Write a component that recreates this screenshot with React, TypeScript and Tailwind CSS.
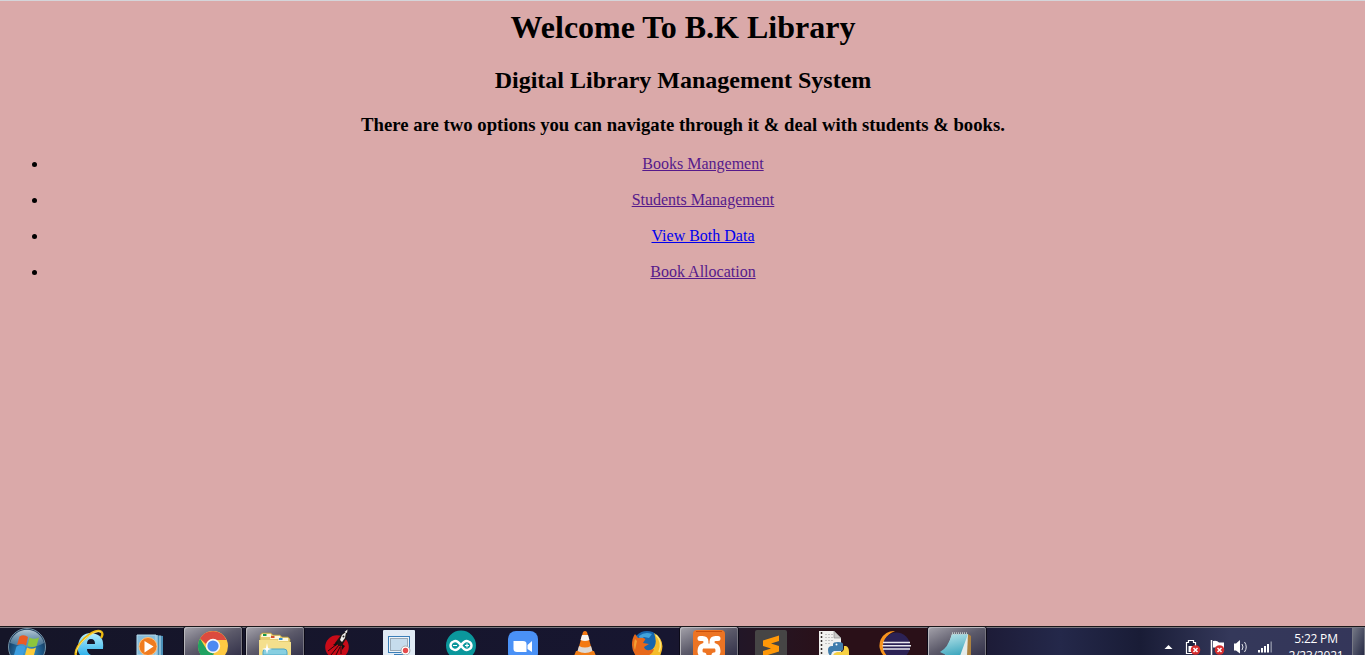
import type { ReactNode } from "react";

const links = [
  { label: "Books Mangement", visited: true },
  { label: "Students Management", visited: true },
  { label: "View Both Data", visited: false },
  { label: "Book Allocation", visited: true },
];

function Slot({ x, active, name, children }: { x: number; active?: boolean; name: string; children: ReactNode }) {
  return (
    <button
      aria-label={name}
      className={
        active
          ? "h-[28px] w-[58px] shrink-0 overflow-hidden rounded-t-[3px] bg-linear-to-br from-[#a5a3ab] via-[#5c5a6a] to-[#34324a] shadow-[inset_1px_1px_0_#b9b8bd,inset_-1px_0_0_#77757f,0_0_0_1px_#0c0a18]"
          : "h-[28px] w-[58px] shrink-0 overflow-hidden"
      }
    >
      <svg className="block" width="58" height="28" viewBox={`${x} 627 58 28`}>
        {children}
      </svg>
    </button>
  );
}

function StartOrb() {
  return (
    <svg className="block shrink-0" width="60" height="28" viewBox="0 627 60 28">
      <defs>
        <radialGradient id="orb" cx="0.5" cy="0.65" r="0.6">
          <stop offset="0" stopColor="#3fa4d8" />
          <stop offset="0.65" stopColor="#1d5888" />
          <stop offset="1" stopColor="#173453" />
        </radialGradient>
        <linearGradient id="gloss" x1="0" y1="0" x2="0" y2="1">
          <stop offset="0" stopColor="#c8dbe6" stopOpacity="0.9" />
          <stop offset="1" stopColor="#8fb6cc" stopOpacity="0.3" />
        </linearGradient>
      </defs>
      <circle cx="27" cy="647" r="18.5" fill="url(#orb)" stroke="#7492a6" />
      <path d="M10 643A17.5 17.5 0 0 1 44 643Q36 648 27 647Q18 646 10 643Z" fill="url(#gloss)" />
      <path d="M19.5 636.5Q24 634 28 637L26 645.5Q22 643 17 645Z" fill="#ea5b24" />
      <path d="M29.500 637.500Q34 640 39 637.500L36.500 646Q32 648 27.500 646Z" fill="#8cc63c" />
      <path d="M16.500 646.500Q21 644.500 25.500 647L23 655H14Z" fill="#3c9ee0" />
      <path d="M27 647.500Q31.500 650 36 647.500L34 655H25Z" fill="#fccb3b" />
    </svg>
  );
}

function Taskbar() {
  return (
    <footer className="h-[29px] shrink-0 overflow-hidden border-t border-[#1b171a] bg-[#17162b]">
      <div className="flex h-[28px] bg-[linear-gradient(90deg,#151528_0,#171630_670px,#241625_755px,#2a1018_830px,#2a1018_925px,#1d1c38_990px,#24284a_1060px,#191c36_1140px,#34385a_1230px,#34365a_1365px)] shadow-[inset_0_1px_0_#77757d]">
        <StartOrb />
        <nav className="flex gap-1">
          <Slot x={60} name="Internet Explorer">
            <defs>
              <linearGradient id="ie" x1="0" y1="0" x2="0" y2="1">
                <stop offset="0" stopColor="#b4eefd" />
                <stop offset="1" stopColor="#32b2ea" />
              </linearGradient>
            </defs>
            <path d="M103 649H87Q87 653 91 655H80Q77 651 78 645Q80 633 91 633Q105 634 103 649ZM87 644H95Q95 639 91 639Q87 639 87 644Z" fill="url(#ie)" fillRule="evenodd" />
            <path d="M76 656Q74 649 84 639Q96 628 101.500 632Q103.500 634 101 638" fill="none" stroke="#edb90f" strokeWidth="2.400" />
            <path d="M76 653Q77 646 86 638Q96 630 101 632" fill="none" stroke="#ffe778" strokeWidth="0.900" />
          </Slot>
          <Slot x={122} name="Windows Media Player">
            <path d="M155 635L163 636V655H155Z" fill="#4b90b8" />
            <path d="M157 635V655M160 635.500V655" stroke="#c6e4f1" />
            <path d="M137 635H156V655H137Z" fill="#86bddb" stroke="#b5d9ea" />
            <circle cx="148" cy="646.500" r="9" fill="#f07c20" stroke="#ffc079" />
            <path d="M144.500 641L153.500 646.500L144.500 652.500Z" fill="white" />
          </Slot>
          <Slot x={184} active name="Google Chrome">
            <circle cx="213" cy="646" r="15" fill="#ffca43" />
            <path d="M200 638.500A15 15 0 0 1 226.500 640H213A7 7 0 0 0 206 644Z" fill="#dc4b3e" />
            <path d="M200 638.500L207 650Q210 654 214 653L211 661A15 15 0 0 1 200 638.500Z" fill="#20a261" />
            <circle cx="213" cy="646" r="7.200" fill="#f7f7f7" />
            <circle cx="213" cy="646" r="5.600" fill="#4b8af2" />
          </Slot>
          <Slot x={246} active name="Windows Explorer">
            <path d="M260 655V635L262 633H271L273 635H280L282 637H288L290 639V655Z" fill="#e6cd72" stroke="#a99549" strokeWidth="0.700" />
            <path d="M261 637H271V634H262ZM270 639H280V636H271ZM278 641H288V638H279Z" fill="#fff8dc" />
            <path d="M263 634H266.500V636H263Z" fill="#159849" />
            <path d="M271 636H274.500V638H271Z" fill="#d65131" />
            <path d="M279 638H282.500V640H279Z" fill="#338ed0" />
            <path d="M259 640H277L280 642H291V655H259Z" fill="#f4df8c" />
            <path d="M263 655V652Q263 649 266 649H284Q287 649 287 652V655Z" fill="#87cfe1" stroke="#51a6c4" />
            <path d="M267 643L268 648L272 649L268 650L267 654L266 650L262 649L266 648Z" fill="white" />
          </Slot>
          <Slot x={308} name="Rocket">
            <circle cx="337" cy="647" r="11.800" fill="#c90b18" />
            <path d="M331 655L339 645M328 651L337 644M336 655L340 647M341 654V647" stroke="#2a0408" strokeWidth="1" />
            <path d="M348 629L346 639L341 647L335 643L341 635Z" fill="#1c1717" />
            <path d="M346 632L345 638L342 642L340 640L342 635Z" fill="#eee" />
            <path d="M338 641L333 645L336 646M342 644L342 650L345 646" fill="#111" />
            <circle cx="343.500" cy="636.500" r="1" fill="#222" />
            <path d="M347.500 629.500L347 633L344.500 632Z" fill="#eee" />
          </Slot>
          <Slot x={370} name="Screen Recorder">
            <rect x="383" y="630" width="32" height="26" rx="1" fill="#e1ebf5" />
            <rect x="388.500" y="636.500" width="21" height="16" fill="#eef4fa" stroke="#397eb8" />
            <rect x="390.500" y="638.500" width="17" height="12" fill="#c6dcec" stroke="#98a8b5" />
            <path d="M394 654.500H404" stroke="#397eb8" />
            <circle cx="405.500" cy="650.500" r="4.500" fill="white" stroke="#a6aaad" />
            <circle cx="405.500" cy="650.500" r="2.700" fill="#e64a4a" />
          </Slot>
          <Slot x={432} name="Arduino">
            <circle cx="461" cy="645.500" r="15" fill="#0b979c" />
            <path d="M461 645.500C458 641 455.500 640.500 453.500 641.500C449.500 643 449.500 648 453.500 649.500C455.500 650.500 458 650 461 645.500C464 641 466.500 640.500 468.500 641.500C472.500 643 472.500 648 468.500 649.500C466.500 650.500 464 650 461 645.500Z" fill="none" stroke="white" strokeWidth="2.400" />
            <path d="M453 645.500H457M465 645.500H469M467 643.500V647.500" stroke="white" strokeWidth="1.200" />
          </Slot>
          <Slot x={494} name="Zoom">
            <rect x="508" y="631" width="30" height="30" rx="8" fill="#4a91f6" />
            <path d="M513.500 641H523Q526.500 641 526.500 644V652H517Q513.500 652 513.500 649Z" fill="white" />
            <path d="M527.500 645L532 641V652L527.500 649Z" fill="white" />
          </Slot>
          <Slot x={556} name="VLC">
            <path d="M576 651H594L596 656H574Z" fill="#f07e16" />
            <path d="M583 632Q585 630 587 632L592.500 652Q585 656 577.500 652Z" fill="#f47a12" />
            <path d="M582 635H588L589.500 640Q585 642 580.500 640Z" fill="#f7f4ef" />
            <path d="M579 646Q585 649 591 646L592.500 651Q585 655 577.500 651Z" fill="#ddd9d5" />
          </Slot>
          <Slot x={618} name="Firefox">
            <circle cx="647" cy="645.500" r="14.500" fill="#1766ad" />
            <path d="M639 636Q645 631 652 634L649 638L644 637L640 640Z" fill="#40a3dd" />
            <path d="M654 633Q667 641 660 656H638L650 651Q659 646 654 633Z" fill="#f5bc29" />
            <path d="M656 635Q663 642 659 652" fill="none" stroke="#ffe77c" strokeWidth="1.500" />
            <path d="M635 634L638 638Q643 637 645.500 639L643 643L649 644L644 647Q645 652 654 649Q652 656 644 656H636Q632 651 632 645Q632 638 635 634Z" fill="#e76819" />
            <path d="M635 639L637 641L635 650Q633 646 635 639Z" fill="#f6a033" />
          </Slot>
          <Slot x={680} active name="XAMPP">
            <rect x="693" y="630" width="32" height="32" rx="4" fill="#ed7423" />
            <path d="M696 631.500H722" stroke="#c94f0b" />
            <path d="M700 638.500H702.500Q706 638.500 706 642Q706 645.500 702.500 646Q700 647 700 651Q700 655 704 655M718 638.500H715.500Q712 638.500 712 642Q712 645.500 715.500 646Q718 647 718 651Q718 655 714 655M704 646H714" fill="none" stroke="white" strokeWidth="5" strokeLinecap="round" strokeLinejoin="round" />
          </Slot>
          <Slot x={742} name="Sublime Text">
            <rect x="755" y="630" width="32" height="32" rx="2" fill="#464545" />
            <path d="M779 635.500L763 640.500V646L771 648.500L763 651V656.500L779 651.500V646L771 643.500L779 641Z" fill="#ff9808" />
          </Slot>
          <Slot x={804} name="Python File">
            <path d="M819 631H834L841 638V656H819Z" fill="#f1f1ef" />
            <path d="M821.500 632V655" stroke="#332c2c" strokeWidth="1.500" strokeDasharray="2 2" />
            <path d="M825 634.500H834M825 637.500H837M825 640.500H834M825 643.500H831" stroke="#c3c3c3" strokeDasharray="2 1" />
            <path d="M834 631V638H841Z" fill="#c8c8c7" stroke="#858585" strokeWidth="0.600" />
            <path d="M833 646V644Q833 642 838 642Q843 642 843 644V649Q843 651 840 651H834Q831 652 831 656Q828 655 828 650Q828 646 832 646Z" fill="#3f7dad" />
            <path d="M844 646H846Q849 647 849 652V656H833Q833 653 837 652H841Q844 651 844 648Z" fill="#f8d142" />
            <circle cx="836.500" cy="644.500" r="1" fill="white" />
          </Slot>
          <Slot x={866} name="Eclipse">
            <path d="M895 631A14.500 14.500 0 0 0 884 656L887 655A15 15 0 0 1 891 633Z" fill="#f7941e" />
            <circle cx="896.500" cy="646" r="13.500" fill="#2c2255" />
            <path d="M883 642.500H910M882.500 645.700H911M883 649H910" stroke="#e9e7ee" strokeWidth="1.500" />
          </Slot>
          <Slot x={928} active name="Notepad">
            <defs>
              <linearGradient id="page" x1="0.3" y1="0" x2="0.6" y2="1">
                <stop offset="0" stopColor="#b4e2e8" />
                <stop offset="1" stopColor="#3ba5bd" />
              </linearGradient>
            </defs>
            <path d="M968 634L971 636V655H965Z" fill="#ad8240" />
            <path d="M952 634H968L967 656H945Z" fill="#e5ecea" />
            <path d="M952 634H968L960 656H948L940 652Q948 648 952 634Z" fill="url(#page)" />
            <path d="M952 633.500H968" stroke="#bbc4c4" strokeWidth="2.500" strokeDasharray="1 1" />
          </Slot>
        </nav>
        <div className="ml-auto flex h-[28px]">
          <svg className="block" width="125" height="28" viewBox="1156 627 125 28">
            <path d="M1164.500 649L1168.500 645L1172.500 649Z" fill="white" />
            <path d="M1188.500 640.500H1193.500V642.500H1195.500V653.500H1186.500V642.500H1188.500Z" fill="#202440" stroke="white" strokeWidth="1.200" />
            <path d="M1188.500 646H1193.500V652H1188.500Z" fill="white" />
            <path d="M1211.500 640V655" stroke="white" strokeWidth="1.500" />
            <path d="M1213 641Q1217 640 1219 642.500H1224V649Q1220 650 1217 647.500H1213Z" fill="white" />
            {[1195.5, 1219.5].map((x) => (
              <g key={x}>
                <circle cx={x} cy="650" r="4.800" fill="#d52d2d" />
                <path d={`M${x - 2} 648l4 4m0-4l-4 4`} stroke="white" strokeWidth="1.500" />
              </g>
            ))}
            <path d="M1234 643.500H1236L1240 640V653.500L1236 650.500H1234Z" fill="white" />
            <path d="M1242 644Q1244 647 1242 650M1244.500 642Q1248 647 1244.500 652" fill="none" stroke="#e2e4eb" />
            <path d="M1259 650V652.500M1262 648V652.500M1265 646V652.500M1268 644V652.500" stroke="white" strokeWidth="2" />
            <path d="M1271.200 641.500V652.500" stroke="#888ca1" strokeWidth="1.500" />
          </svg>
          <time className="block w-[71px] overflow-hidden pt-[3px] pr-px text-center font-['Open_Sans',sans-serif] text-[12px] leading-[17px] tracking-[-0.2px] text-white">
            <span className="block">5:22 PM</span>
            <span className="block">2/23/2021</span>
          </time>
          <div className="h-[28px] w-[13px] border border-b-0 border-[#777985] bg-linear-to-br from-[#747784] to-[#282b46]" />
        </div>
      </div>
    </footer>
  );
}

export default function App() {
  return (
    <div className="flex h-[655px] w-[1365px] flex-col overflow-hidden border-t border-[#d4d5da] bg-[#daa9a9] font-['Liberation_Serif',serif] text-black">
      <main className="min-h-0 flex-1 pt-2 pr-[7px] pl-2 text-center">
        <h1 className="text-[32px] leading-[37px] font-bold">Welcome To B.K Library</h1>
        <h2 className="mt-[21px] text-[24px] leading-[27px] font-bold">Digital Library Management System</h2>
        <h3 className="mt-5 text-[18.72px] leading-[21px] font-bold">
          There are two options you can navigate through it &amp; deal with students &amp; books.
        </h3>
        <ul className="mt-5 flex list-disc flex-col gap-[18px] pl-10 text-[16px] leading-[18px]">
          {links.map((link) => (
            <li key={link.label}>
              <a href="#" className={link.visited ? "text-[#551a8b] underline" : "text-[#0000ee] underline"}>
                {link.label}
              </a>
            </li>
          ))}
        </ul>
      </main>
      <Taskbar />
    </div>
  );
}
